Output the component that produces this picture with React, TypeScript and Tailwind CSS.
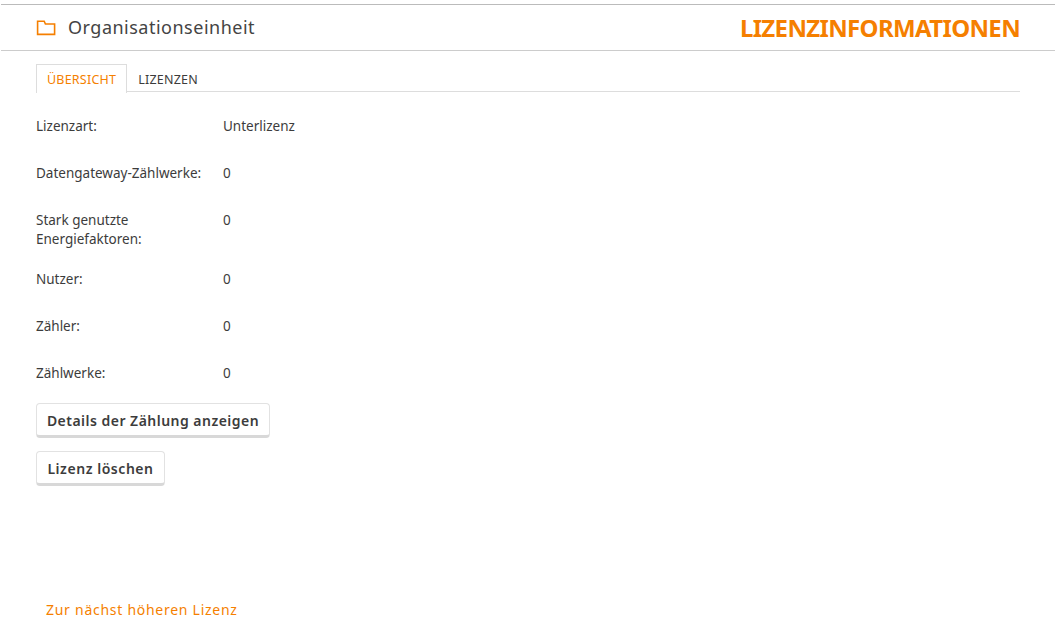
const font = "font-['Noto_Sans',sans-serif]";

function FolderIcon() {
  return (
    <svg width="20" height="16" viewBox="0 0 20 16" fill="none" stroke="#f57f00" strokeWidth="1.6">
      <path d="M1.6 14.4V1.2h6.6l1.2 2.8h9.2v10.4z" />
    </svg>
  );
}

const rows = [
  { label: 'Lizenzart:', value: 'Unterlizenz' },
  { label: 'Datengateway-Zählwerke:', value: '0' },
  { label: 'Stark genutzte Energiefaktoren:', value: '0' },
  { label: 'Nutzer:', value: '0' },
  { label: 'Zähler:', value: '0' },
  { label: 'Zählwerke:', value: '0' },
];

function Btn({ children, className }: { children: string; className: string }) {
  return (
    <button className={`h-[35px] self-start rounded-[4px] border border-[#e2e2e2] border-b-[3px] border-b-[#d8d8d8] bg-white pt-[2px] text-center text-[14px] font-semibold text-[#3c3c3c] ${className}`}>
      {children}
    </button>
  );
}

export default function App() {
  return (
    <div className={`${font} h-[633px] w-[1059px] overflow-hidden bg-white pt-[4px] pr-[4px] pl-[1px] text-[#3c3c3c]`}>
      <div className="flex h-[47px] items-center justify-between border-y border-t-[#bbb] border-b-[#ccc] pr-[35px] pl-[35px]">
        <div className="flex items-center gap-[12px]">
          <FolderIcon />
          <span className="text-[18px] tracking-[0.5px] text-[#444]">Organisationseinheit</span>
        </div>
        <span className="text-[24px] font-bold tracking-[-0.65px] text-[#f57f00]">LIZENZINFORMATIONEN</span>
      </div>

      <div className="pr-[35px] pl-[35px]">
        <div className="mt-[13px] flex h-[28px] border-b border-[#ddd]">
          <div className="-mb-px h-[29px] border border-b-0 border-[#ddd] bg-white px-[10px] pt-[6px] text-[12.5px] tracking-[0.22px] text-[#f57f00]">ÜBERSICHT</div>
          <div className="px-[11px] pt-[7px] text-[12.5px] tracking-[0.22px]">LIZENZEN</div>
        </div>

        <div className="mt-[25px] flex flex-col text-[13.5px] leading-[19px]">
          {rows.map((r, i) => (
            <div key={r.label} className={`flex ${i === 2 ? 'mb-[21px]' : 'mb-[28px]'}`}>
              <div className="w-[187px] pr-[10px]">{r.label}</div>
              <div>{r.value}</div>
            </div>
          ))}
        </div>

        <div className="-mt-[8px] flex flex-col gap-[13px]">
          <Btn className="w-[234px] tracking-[0.48px]">Details der Zählung anzeigen</Btn>
          <Btn className="w-[129px] tracking-[0.55px]">Lizenz löschen</Btn>
        </div>

        <a className="mt-[113px] ml-[10px] block text-[14px] tracking-[0.73px] text-[#f57f00]">Zur nächst höheren Lizenz</a>
      </div>
    </div>
  );
}
